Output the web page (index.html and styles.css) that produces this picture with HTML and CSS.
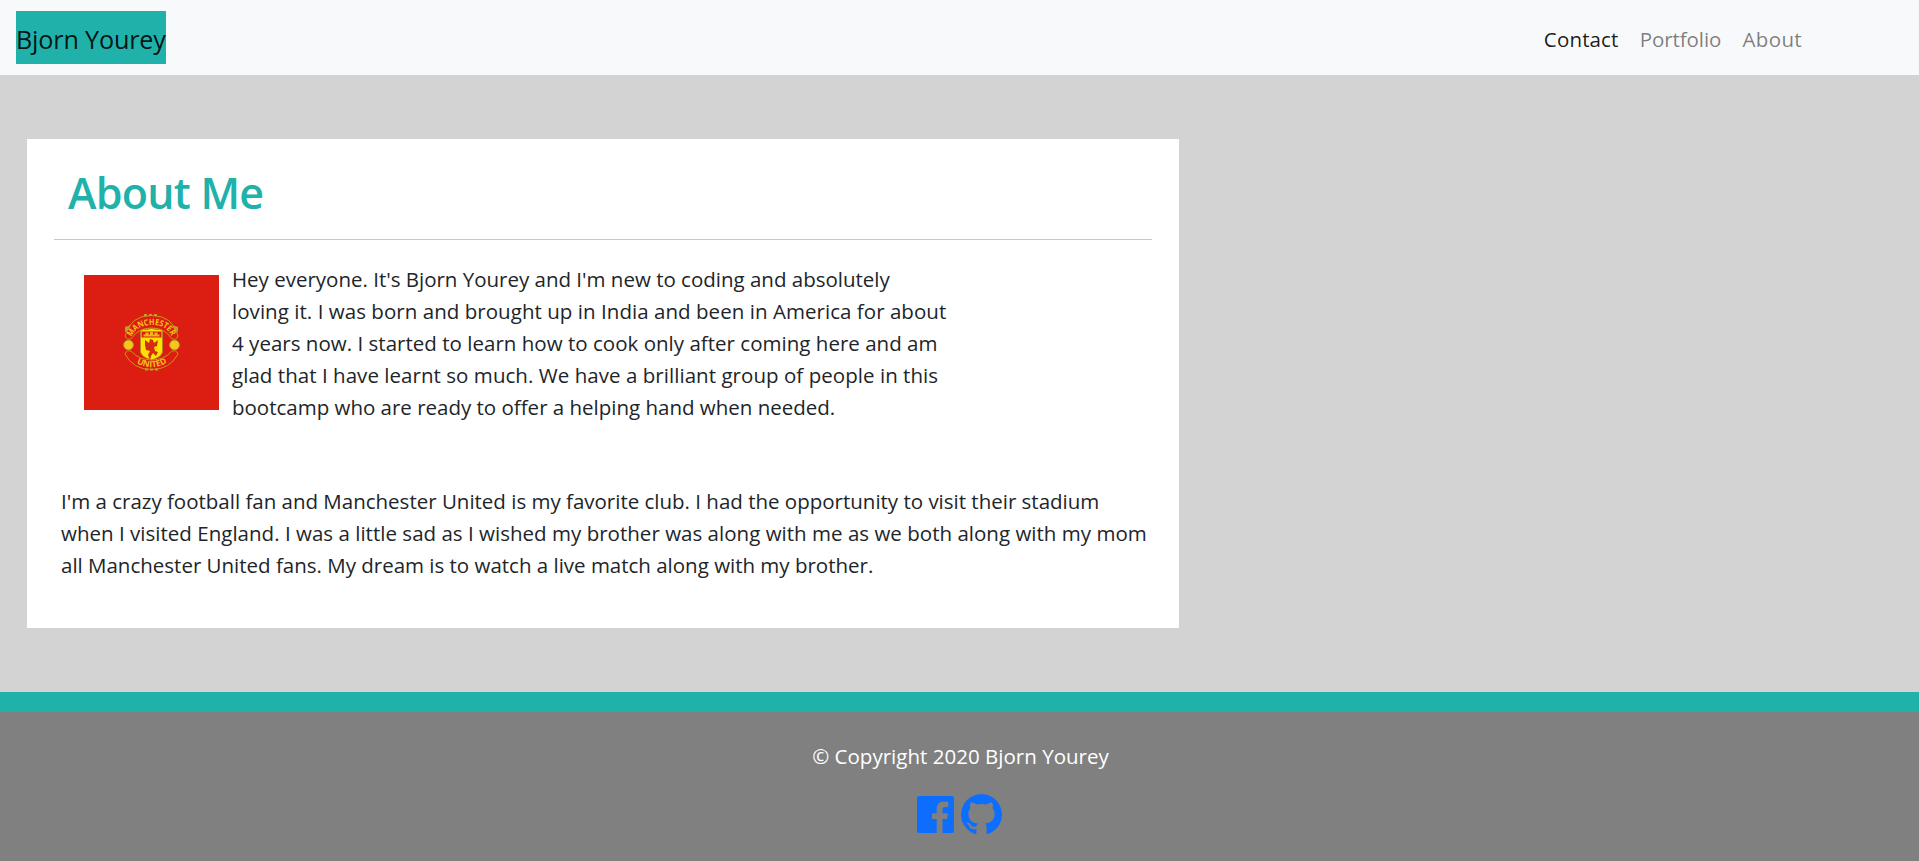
FILE: index.html
```html
<!DOCTYPE html>
<html lang="en">
<head>
<meta charset="utf-8">
<title>Bjorn Yourey</title>
<link rel="stylesheet" href="styles.css">
</head>
<body>
<nav class="navbar">
  <a class="brand">Bjorn Yourey</a>
  <div class="links">
    <a class="link active">Contact</a>
    <a class="link portfolio">Portfolio</a>
    <a class="link about">About</a>
  </div>
</nav>
<main class="main">
  <section class="card">
    <h1 class="title">About Me</h1>
    <hr class="rule">
    <div class="intro">
      <svg class="photo" viewBox="0 0 135 135" role="img" aria-label="Manchester United crest">
        <defs>
          <path id="top" d="M47 63Q52 50.500 67.500 50T88 63"/>
          <path id="bottom" d="M46 83.500Q67.500 101 89 83.500"/>
        </defs>
        <rect width="135" height="135" fill="#dc1e12"/>
        <g fill="#dc1e12" stroke="#c9941c" stroke-width="1">
          <path d="M41 61Q46 40.500 67.500 40.500T94 61Q92 66 87.500 63.500Q81 53 67.500 53T47.500 63.500Q43 66 41 61Z"/>
          <path d="M41 79Q43 74 47.500 76.500Q55 85 67.500 85T87.500 76.500Q92 74 94 79Q86 94.500 67.500 94.500T41 79Z"/>
        </g>
        <path d="M60 40h15M61 94.500h13" stroke="#b8a02b" stroke-width="2" stroke-dasharray="3 2"/>
        <path d="M41 52l6-2-3 6-3 1zM94 52l-6-2 3 6 3 1z" fill="#b8a02b"/>
        <circle cx="44.500" cy="70" r="4.800" fill="#f3c81b" stroke="#b8a41d"/>
        <circle cx="90.500" cy="70" r="4.800" fill="#f3c81b" stroke="#b8a41d"/>
        <path d="M56.500 55.500q3-2 6-1 5-2 10 0 3-1 6 1V77q-1 5-11 8-10-3-11-8z" fill="#ffe100" stroke="#b9871a"/>
        <path d="M57.500 56.500h20v6h-20z" fill="#dc1e12"/>
        <path d="M59.500 59.500h2v-2h3v2h1.500v-2.500h3v2.500h1.500v-2h3v2h2v2h-16z" fill="#f2b31a"/>
        <path d="M61 65l4 3 1-4 3 1 1 3 4-3-1 6-3 1 1 4 3 1-2 4-3-3-2 3-1 4-2-5 2-4-4-1-1-5z" fill="#d62c15"/>
        <text class="crest-text"><textPath href="#top" startOffset="1" textLength="49" lengthAdjust="spacingAndGlyphs">MANCHESTER</textPath></text>
        <text class="crest-text"><textPath href="#bottom" startOffset="8" textLength="32" lengthAdjust="spacingAndGlyphs">UNITED</textPath></text>
      </svg>
      <p class="intro-text"><span class="snug">Hey everyone. It's Bjorn Yourey and I'm new to coding and absolutely</span><br><span class="loose">loving it. I was born and brought up in India and been in America for about</span><br>4 years now. I started to learn how to cook only after coming here and am<br><span class="loose">glad that I have learnt so much. We have a brilliant group of people in this</span><br><span class="snug">bootcamp who are ready to offer a helping hand when needed.</span></p>
    </div>
    <p class="more"><span class="snug">I'm a crazy football fan and Manchester United is my favorite club. I had the opportunity to visit their stadium</span><br>when I visited England. I was a little sad as I wished my brother was along with me as we both along with my mom<br><span class="snug">all Manchester United fans. My dream is to watch a live match along with my brother.</span></p>
  </section>
</main>
<footer class="footer">
  <p class="copyright">© Copyright 2020 Bjorn Yourey</p>
  <div class="social">
    <svg class="facebook" viewBox="0 0 37 37" aria-label="Facebook"><path d="M2 0H35Q37 0 37 2V35Q37 37 35 37H25.500V22.900H30.200L30.900 17.300H25.500V13.700C25.500 12 26 11 28.300 11H31.200V5.900Q30 5.600 27 5.600C22.500 5.600 19.700 8.300 19.700 13.200V17.300H15V22.900H19.700V37H2Q0 37 0 35V2Q0 0 2 0Z"/></svg>
    <svg class="github" viewBox="128 128 1536 1500" aria-label="GitHub"><path d="M896 128q209 0 385.500 103t279.500 279.500 103 385.500q0 251-146.500 451.500t-378.500 277.500q-27 5-40-7t-13-30q0-3 .5-76.500t.5-134.500q0-97-52-142 57-6 102.500-18t94-39 81-66.500 53-105 20.500-150.500q0-119-79-206 37-91-8-204-28-9-81 11t-92 44l-38 24q-93-26-192-26t-192 26q-16-11-42.500-27t-83.500-38.500-85-13.500q-45 113-8 204-79 87-79 206 0 85 20.500 150t52.500 105 80.500 67 94 39 102.500 18q-39 36-49 103-21 10-45 15t-57 5-65.500-21.500-55.500-62.500q-19-32-48.500-52t-49.500-24l-20-3q-21 0-29 4.500t-5 11.500 9 14 13 12l7 5q22 10 43.500 38t31.500 51l10 23q13 38 44 61.500t67 30 69.500 7 55.500-3.500l23-4q0 38 .5 88.500t.5 54.500q0 18-13 30t-40 7q-232-77-378.500-277.500t-146.500-451.500q0-209 103-385.500t279.500-279.500 385.500-103z"/></svg>
  </div>
</footer>
</body>
</html>
```
FILE: styles.css
```css
* { box-sizing: border-box; }

body {
  margin: 0;
  height: 861px;
  display: flex;
  flex-direction: column;
  overflow: hidden;
  background: #d3d3d3;
  color: #212529;
  font-family: "Open Sans", "Noto Sans", sans-serif;
  font-size: 20.5px;
  line-height: 32px;
  letter-spacing: 0.02px;
}

p, h1, hr { margin: 0; }

.snug { letter-spacing: -0.006px; }
.loose { letter-spacing: 0.045px; }

.navbar {
  height: 75px;
  padding: 11px 117px 11px 16px;
  display: flex;
  justify-content: space-between;
  background: #f8f9fa;
}

.brand {
  width: 150px;
  height: 53px;
  padding-top: 8px;
  background: #20b2aa;
  color: rgba(0, 0, 0, 0.9);
  font-size: 25.2px;
  line-height: 40px;
  letter-spacing: -0.17px;
  white-space: nowrap;
}

.links {
  display: flex;
  gap: 21.300px;
  padding-top: 12px;
}

.link { color: rgba(0, 0, 0, 0.5); }
.active { color: rgba(0, 0, 0, 0.9); letter-spacing: 0.15px; }
.portfolio { letter-spacing: -0.1px; }
.about { letter-spacing: 0.35px; }

.main { padding: 64px 27px; }

.card {
  width: 1152px;
  height: 489px;
  padding: 28px 27px;
  background: #fff;
}

.title {
  height: 72px;
  padding-left: 14px;
  color: #20b2aa;
  font-size: 43px;
  font-weight: 600;
  line-height: 51px;
  letter-spacing: -0.75px;
}

.rule {
  height: 1px;
  border: 0;
  background: #c8c8c8;
}

.intro {
  display: flex;
  gap: 13px;
  padding: 23px 0 0 30px;
}

.photo {
  width: 135px;
  height: 135px;
  margin-top: 12px;
}

.crest-text {
  fill: #f9be1b;
  font-size: 8.5px;
  font-weight: 700;
  letter-spacing: 0;
}

.intro-text { white-space: nowrap; }

.more {
  padding: 62px 0 0 7px;
  white-space: nowrap;
}

.footer {
  flex: 1;
  padding-top: 28px;
  border-top: 20px solid #20b2aa;
  background: #808080;
  color: #fff;
  text-align: center;
}

.copyright { padding-left: 2px; }

.social {
  display: flex;
  justify-content: center;
  gap: 7px;
  padding-top: 22px;
  fill: #0d6efd;
}

.facebook {
  width: 37px;
  height: 37px;
  margin-top: 2px;
}

.github {
  width: 41px;
  height: 40px;
}
```
